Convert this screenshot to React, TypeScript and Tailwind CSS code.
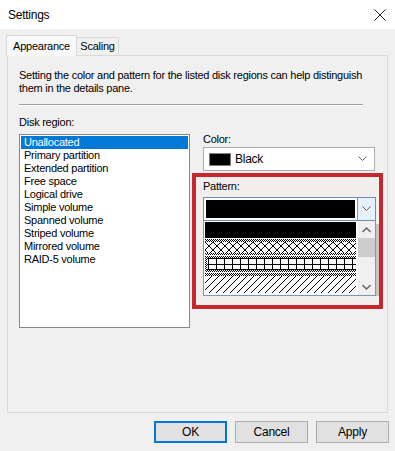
import React from "react";

const FONT = { fontFamily: '"Segoe UI", "Liberation Sans", Arial, sans-serif', letterSpacing: "-0.25px" };

function Chevron({ color = "#444" }: { color?: string }) {
  return (
    <svg width="9" height="6" viewBox="0 0 9 6" fill="none">
      <path d="M0.5 0.5 L4.5 4.5 L8.5 0.5" stroke={color} strokeWidth="1" />
    </svg>
  );
}

function Checker({ id }: { id: string }) {
  return (
    <pattern id={id} width="2" height="2" patternUnits="userSpaceOnUse">
      <rect width="2" height="2" fill="#fff" />
      <rect x="0" y="0" width="1" height="1" fill="#000" />
      <rect x="1" y="1" width="1" height="1" fill="#000" />
    </pattern>
  );
}

function CrossHatch() {
  return (
    <svg width="151" height="16" className="block">
      <defs>
        <Checker id="ck1" />
        <pattern id="xh" width="8" height="8" patternUnits="userSpaceOnUse" x="0" y="3">
          <rect width="8" height="8" fill="#fff" />
          <path d="M0 0 L8 8 M8 0 L0 8" stroke="#000" strokeWidth="1" shapeRendering="crispEdges" />
        </pattern>
      </defs>
      <rect width="151" height="16" fill="url(#ck1)" />
      <rect y="3" width="151" height="11" fill="url(#xh)" />
    </svg>
  );
}

function Grid() {
  return (
    <svg width="151" height="16" className="block">
      <defs>
        <Checker id="ck2" />
        <pattern id="gr" width="8" height="6" patternUnits="userSpaceOnUse" x="3" y="2">
          <rect width="8" height="6" fill="#fff" />
          <rect width="8" height="1" fill="#000" />
          <rect width="1" height="6" fill="#000" />
        </pattern>
      </defs>
      <rect width="151" height="16" fill="url(#ck2)" />
      <rect x="2" y="2" width="149" height="12" fill="url(#gr)" />
      <rect x="2" y="13" width="149" height="1" fill="#000" />
    </svg>
  );
}

function Diagonal() {
  return (
    <svg width="151" height="20" className="block">
      <defs>
        <Checker id="ck3" />
        <pattern id="dg" width="7" height="7" patternUnits="userSpaceOnUse" x="0" y="3">
          <rect width="7" height="7" fill="#fff" />
          <path d="M0 7 L7 0 M-1 1 L1 -1 M6 8 L8 6" stroke="#000" strokeWidth="1" />
        </pattern>
      </defs>
      <rect width="151" height="20" fill="url(#ck3)" />
      <rect y="3" width="151" height="17" fill="url(#dg)" />
    </svg>
  );
}

const items = [
  "Unallocated",
  "Primary partition",
  "Extended partition",
  "Free space",
  "Logical drive",
  "Simple volume",
  "Spanned volume",
  "Striped volume",
  "Mirrored volume",
  "RAID-5 volume",
];

export default function App() {
  return (
    <div className="w-[395px] h-[451px] bg-[#f0f0f0] flex flex-col text-[11px] text-black overflow-hidden" style={FONT}>
      {/* Title bar */}
      <div className="h-[29px] bg-white flex items-center justify-between pl-[8px] pr-[8px] shrink-0">
        <span className="text-[12px] leading-none">Settings</span>
        <svg width="12" height="12" viewBox="0 0 12 12" className="mr-[1px]">
          <path d="M0.5 0.5 L11.5 11.5 M11.5 0.5 L0.5 11.5" stroke="#222" strokeWidth="1" />
        </svg>
      </div>

      {/* Tabs */}
      <div className="flex items-end pl-[6px] mt-[6px] h-[20px] shrink-0 relative z-10">
        <div className="h-[21px] w-[71px] border border-b-0 border-[#d9d9d9] bg-[#f9f9f9] flex items-center justify-center leading-none mb-[-1px] relative">
          Appearance
        </div>
        <div className="h-[18px] w-[42px] border border-l-0 border-b-0 border-[#d9d9d9] bg-[#f0f0f0] flex items-center justify-center leading-none">
          Scaling
        </div>
      </div>

      {/* Panel */}
      <div className="mx-[7px] h-[358px] border border-[#d9d9d9] bg-[#f0f0f0] flex flex-col px-[11px] pt-[13px] shrink-0">
        <p className="leading-[13px] whitespace-nowrap">
          Setting the color and pattern for the listed disk regions can help distinguish
          <br />
          them in the details pane.
        </p>
        <div className="h-px bg-[#a0a0a0] mt-[9px] mr-[13px] border-b border-white box-content" />
        <div className="mt-[11px] leading-none">Disk region:</div>
        <div className="flex mt-[6px]">
          {/* Listbox */}
          <div className="w-[171px] h-[194px] bg-white border border-[#828790] pt-[1px] px-[1px] shrink-0">
            {items.map((it, i) => (
              <div
                key={it}
                className={
                  "h-[13px] leading-[13px] pl-[3px] " +
                  (i === 0 ? "bg-[#0078d7] text-white" : "")
                }
              >
                {it}
              </div>
            ))}
          </div>

          {/* Right column */}
          <div className="flex flex-col ml-[2px] w-[195px] mt-[-1px]">
            <div className="pl-[11px] leading-[13px]">Color:</div>
            <div className="ml-[11px] mt-[1px] w-[172px] h-[24px] bg-white border border-[#adadad] flex items-center pl-[5px] pr-[7px]">
              <div className="w-[22px] h-[13px] bg-black border border-[#808080]" />
              <span className="ml-[4px] text-[12px]">Black</span>
              <div className="ml-auto">
                <Chevron color="#606060" />
              </div>
            </div>

            {/* Highlight box */}
            <div className="mt-[2px] h-[136px] border-[4px] border-[#c8262f] bg-[#f3eeee] flex flex-col pl-[7px] pt-[2px]">
              <div className="leading-[13px] mt-[1px]">Pattern:</div>
              <div className="mt-[4px] w-[173px] h-[24px] bg-white border border-[#6a8fb5] flex">
                <div className="flex-1 p-[2px] pr-[2px]">
                  <div className="w-full h-full bg-black" />
                </div>
                <div className="w-[18px] bg-[#e5f1fb] border-l border-[#569de5] flex items-center justify-center">
                  <Chevron color="#606060" />
                </div>
              </div>
              <div className="flex">
                <div className="w-[173px] h-[75px] bg-white border border-[#7a98b8] border-t-0 flex">
                  <div className="flex-1 flex flex-col pl-[1px] pt-[1px] gap-[1px]">
                    <div className="h-[16px] bg-black w-[151px]" />
                    <CrossHatch />
                    <Grid />
                    <Diagonal />
                  </div>
                  <div className="w-[17px] bg-[#f0f0f0] flex flex-col items-center">
                    <div className="h-[17px] flex items-center justify-center">
                      <svg width="9" height="6" viewBox="0 0 9 6" fill="none">
                        <path d="M0.5 5 L4.5 1 L8.5 5" stroke="#606060" strokeWidth="1.4" />
                      </svg>
                    </div>
                    <div className="w-full h-[19px] bg-[#cdcdcd]" />
                    <div className="flex-1" />
                    <div className="h-[17px] flex items-center justify-center">
                      <svg width="9" height="6" viewBox="0 0 9 6" fill="none">
                        <path d="M0.5 1 L4.5 5 L8.5 1" stroke="#606060" strokeWidth="1.4" />
                      </svg>
                    </div>
                  </div>
                </div>
                <div className="w-[3px] h-[72px] mt-[3px] bg-[#c9c4c4]" />
              </div>
            </div>
          </div>
        </div>
      </div>

      {/* Buttons */}
      <div className="flex justify-end gap-[8px] pr-[6px] mt-[8px]">
        <button className="w-[73px] h-[22px] bg-[#e1e1e1] border-2 border-[#0078d7] leading-none text-[12px]" style={FONT}>
          OK
        </button>
        <button className="w-[73px] h-[22px] bg-[#e1e1e1] border border-[#adadad] leading-none text-[12px]" style={FONT}>
          Cancel
        </button>
        <button className="w-[73px] h-[22px] bg-[#e1e1e1] border border-[#adadad] leading-none text-[12px]" style={FONT}>
          Apply
        </button>
      </div>
    </div>
  );
}
